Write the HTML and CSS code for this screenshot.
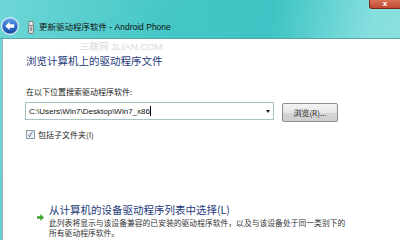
FILE: index.html
```html
<!DOCTYPE html>
<html lang="zh-CN">
<head>
    <meta charset="UTF-8">
    <title>更新驱动程序软件 - Android Phone</title>
    <link rel="stylesheet" href="styles.css">
</head>
<body>
    <div class="window">
        <div class="titlebar">
            <div class="back-btn">
                <svg width="18" height="18" viewBox="0 0 18 18">
                    <defs>
                        <linearGradient id="bg" x1="0" y1="0" x2="0" y2="1">
                            <stop offset="0" stop-color="#6aa8ec"/>
                            <stop offset="0.5" stop-color="#2d6fd0"/>
                            <stop offset="1" stop-color="#1a4aa0"/>
                        </linearGradient>
                    </defs>
                    <circle cx="9" cy="9" r="8.4" fill="url(#bg)" stroke="#e8f2fa" stroke-width="1.2"/>
                    <path d="M4.2 9 L8.6 4.8 L8.6 7.3 L13.2 7.3 L13.2 10.7 L8.6 10.7 L8.6 13.2 Z" fill="#fff"/>
                </svg>
            </div>
            <div class="usb-icon">
                <svg width="6" height="13" viewBox="0 0 6 13">
                    <rect x="1" y="0.5" width="4" height="4" fill="#f4f4f4" stroke="#777" stroke-width="0.8"/>
                    <rect x="0.5" y="4.5" width="5" height="8" rx="1" fill="#d8d8d8" stroke="#666" stroke-width="0.8"/>
                    <rect x="2" y="6" width="2" height="4" fill="#999"/>
                </svg>
            </div>
            <div class="title-text">更新驱动程序软件 - Android Phone</div>
            <div class="close-btn">x</div>
        </div>

        <div class="content">
            <div class="watermark">三联网 3LIAN.COM</div>
            <h1 class="main-instruction">浏览计算机上的驱动程序文件</h1>

            <div class="field">
                <label class="field-label">在以下位置搜索驱动程序软件:</label>
                <div class="path-row">
                    <div class="path-box">
                        <span class="path-value">C:\Users\Win7\Desktop\Win7_x86</span><span class="caret"></span>
                        <span class="drop-arrow"></span>
                    </div>
                    <button class="browse-btn">浏览(R)...</button>
                </div>
                <div class="check-row">
                    <span class="checkbox">✓</span>
                    <span>包括子文件夹(I)</span>
                </div>
            </div>

            <div class="command-link">
                <span class="link-arrow">
                    <svg width="7" height="7" viewBox="0 0 7 7">
                        <path d="M0 2.3 H3.4 V0 L7 3.5 L3.4 7 V4.7 H0 Z" fill="#3aa52e"/>
                    </svg>
                </span>
                <div class="link-body">
                    <div class="link-title">从计算机的设备驱动程序列表中选择(L)</div>
                    <div class="link-desc">此列表将显示与该设备兼容的已安装的驱动程序软件，以及与该设备处于同一类别下的<br>所有驱动程序软件。</div>
                </div>
            </div>
        </div>
    </div>
</body>
</html>
```

FILE: styles.css
```css
body {
    margin: 0;
    width: 400px;
    height: 240px;
    overflow: hidden;
    font-family: "Liberation Sans", "Noto Sans CJK SC", sans-serif;
    background: #5fd2d2;
}

.window {
    display: flex;
    flex-direction: column;
    height: 240px;
    background: linear-gradient(100deg, #6ed6d6 0%, #44c6c6 40%, #3ec4c4 62%, #86dede 85%, #8fe0e0 100%);
}

.titlebar {
    height: 38px;
    display: flex;
    align-items: center;
    border-bottom: 1px solid #5aa6a8;
}

.back-btn {
    margin-left: 1px;
    margin-top: 14px;
    width: 18px;
    height: 18px;
}

.usb-icon {
    margin-left: 9px;
    margin-top: 14px;
    height: 13px;
}

.title-text {
    margin-left: 5px;
    margin-top: 14px;
    font-size: 8.5px;
    color: #111;
}

.close-btn {
    align-self: flex-start;
    margin-left: auto;
    width: 30px;
    height: 8px;
    background: linear-gradient(to bottom, #d8705a, #c04a30);
    border-left: 1px solid #7a2a1a;
    border-bottom: 1px solid #7a2a1a;
    border-bottom-left-radius: 3px;
    color: #fff;
    font-size: 8px;
    font-weight: bold;
    line-height: 7px;
    text-align: center;
}

.content {
    position: relative;
    flex: 1;
    margin-left: 2px;
    background: #fff;
    border-left: 1px solid #9fb4b6;
    padding: 15px 0 0 23px;
}

.watermark {
    position: absolute;
    left: 77px;
    top: 3px;
    font-size: 9.5px;
    line-height: 10px;
    color: #dadada;
}

.main-instruction {
    margin: 0;
    font-family: "Noto Sans CJK SC", sans-serif;
    font-size: 10.5px;
    font-weight: normal;
    line-height: 14px;
    color: #1e3a78;
}

.field {
    margin-top: 18px;
    display: flex;
    flex-direction: column;
}

.field-label {
    font-family: "Noto Sans CJK SC", sans-serif;
    font-size: 8px;
    line-height: 11px;
    color: #222;
}

.path-row {
    margin-top: 3px;
    display: flex;
    align-items: center;
}

.path-box {
    width: 244px;
    height: 16px;
    border: 1px solid #a9c2c4;
    display: flex;
    align-items: center;
    padding-left: 3px;
    box-sizing: content-box;
    margin-left: -1px;
}

.path-value {
    font-size: 8px;
    color: #111;
}

.caret {
    width: 1px;
    height: 10px;
    background: #000;
}

.drop-arrow {
    margin-left: auto;
    margin-right: 3px;
    border-left: 2.5px solid transparent;
    border-right: 2.5px solid transparent;
    border-top: 3px solid #222;
}

.browse-btn {
    margin-left: 8px;
    margin-top: 3px;
    width: 56px;
    height: 19px;
    padding: 0;
    border: 1px solid #8c8c8c;
    border-radius: 2px;
    background: linear-gradient(to bottom, #f4f4f4 0%, #e6e6e6 50%, #d6d6d6 51%, #cfcfcf 100%);
    font-family: "Noto Sans CJK SC", sans-serif;
    font-size: 8px;
    color: #222;
}

.check-row {
    margin-top: 7px;
    display: flex;
    align-items: center;
    font-family: "Noto Sans CJK SC", sans-serif;
    font-size: 8px;
    color: #222;
}

.checkbox {
    width: 7px;
    height: 7px;
    border: 1px solid #8e9aa6;
    background: #eef2f6;
    font-size: 7px;
    line-height: 7px;
    text-align: center;
    color: #2a3d6a;
    margin-right: 3px;
}

.command-link {
    margin-top: 63px;
    margin-left: 11px;
    display: flex;
}

.link-arrow {
    margin-top: 4px;
    margin-right: 5px;
}

.link-title {
    font-family: "Noto Sans CJK SC", sans-serif;
    font-size: 10.5px;
    line-height: 14px;
    color: #1e3a78;
}

.link-desc {
    margin-top: 1px;
    font-family: "Noto Sans CJK SC", sans-serif;
    font-size: 7.8px;
    line-height: 10px;
    color: #333;
}
```
